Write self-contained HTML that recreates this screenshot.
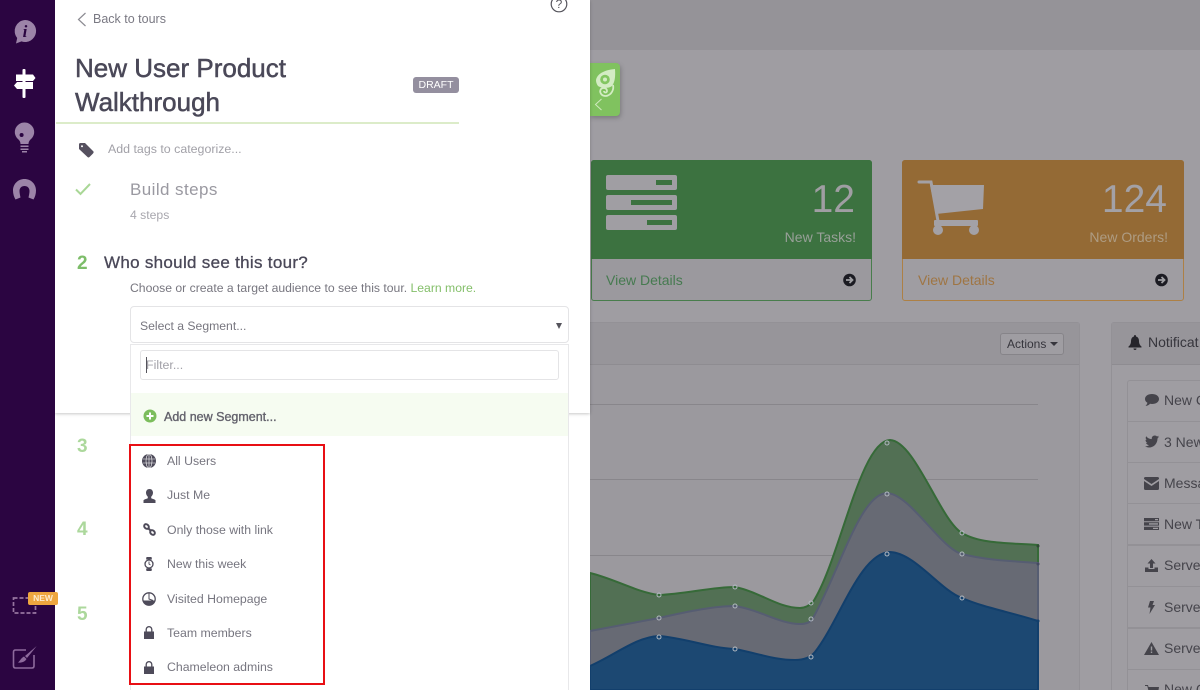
<!DOCTYPE html>
<html style="overflow:hidden;height:690px"><head><meta charset="utf-8"><style>
html,body{margin:0;padding:0}
body{width:1200px;height:690px;overflow:hidden;position:relative;background:#9f9da2;font-family:"Liberation Sans",sans-serif}
#w{position:absolute;left:0;top:0;width:1200px;height:690px;overflow:hidden;background:#9f9da2}
.a{position:absolute;white-space:nowrap}
svg{position:absolute;overflow:visible}
.row{position:absolute;left:167px;font-size:12.3px;color:#76757f;line-height:16px;white-space:nowrap}
.n{position:absolute;left:1164px;font-size:14px;color:#45444b;line-height:16px;white-space:nowrap}
.li{position:absolute;left:1127px;width:90px;height:42px;border:1px solid #939196;box-sizing:border-box}
.num{position:absolute;left:77px;font-size:19px;line-height:22px;font-weight:bold;color:#acd89c}
</style></head><body><div id="w">

<!-- dimmed backdrop -->
<div class="a" style="left:590px;top:0;width:610px;height:50px;background:#959398"></div>

<!-- green card -->
<div class="a" style="left:591px;top:160px;width:281px;height:141px;box-sizing:border-box;border:1px solid #487d4c;border-radius:3px;background:#9b999e"></div>
<div class="a" style="left:591px;top:160px;width:281px;height:99px;background:#3c7240;border-radius:3px 3px 0 0"></div>
<div class="a" style="left:606px;top:175px;width:71px;height:15px;background:#a09ea3;border-radius:2px"></div>
<div class="a" style="left:606px;top:195px;width:71px;height:15px;background:#a09ea3;border-radius:2px"></div>
<div class="a" style="left:606px;top:215px;width:71px;height:15px;background:#a09ea3;border-radius:2px"></div>
<div class="a" style="left:656px;top:180px;width:16px;height:5px;background:#3c7240"></div>
<div class="a" style="left:631px;top:200px;width:41px;height:5px;background:#3c7240"></div>
<div class="a" style="left:647px;top:220px;width:25px;height:5px;background:#3c7240"></div>
<div class="a" style="left:755px;top:179px;width:100px;text-align:right;font-size:39px;line-height:42px;color:#a09ea3">12</div>
<div class="a" style="left:735px;top:229px;width:121px;text-align:right;font-size:14px;line-height:16px;color:#98a098">New Tasks!</div>
<div class="a" style="left:606px;top:272px;font-size:14px;line-height:16px;color:#467a50">View Details</div>
<svg style="left:843px;top:273px" width="14" height="14" viewBox="0 0 14 14"><circle cx="6.5" cy="7" r="6.3" fill="#1b1b22"/><path d="M3 7h6M6.5 4l3 3-3 3" fill="none" stroke="#a0a0a4" stroke-width="1.8"/></svg>

<!-- orange card -->
<div class="a" style="left:902px;top:160px;width:282px;height:141px;box-sizing:border-box;border:1px solid #ad8045;border-radius:3px;background:#9f9da2"></div>
<div class="a" style="left:902px;top:160px;width:282px;height:99px;background:#946a35;border-radius:3px 3px 0 0"></div>
<svg style="left:918px;top:180px" width="68" height="57" viewBox="0 0 68 57"><path d="M12 5H66L65 29 18 34Z" fill="#a3a1a6"/><path d="M1 2H13L20 41" fill="none" stroke="#a3a1a6" stroke-width="3" stroke-linecap="round"/><rect x="16" y="40" width="44" height="6" rx="1" fill="#a3a1a6"/><circle cx="20" cy="50" r="5" fill="#a3a1a6"/><circle cx="56" cy="50" r="5" fill="#a3a1a6"/></svg>
<div class="a" style="left:1067px;top:179px;width:100px;text-align:right;font-size:39px;line-height:42px;color:#a3a1a6">124</div>
<div class="a" style="left:1047px;top:229px;width:121px;text-align:right;font-size:14px;line-height:16px;color:#ae9c83">New Orders!</div>
<div class="a" style="left:918px;top:272px;font-size:14px;line-height:16px;color:#9f7543">View Details</div>
<svg style="left:1155px;top:273px" width="14" height="14" viewBox="0 0 14 14"><circle cx="6.5" cy="7" r="6.3" fill="#1b1b22"/><path d="M3 7h6M6.5 4l3 3-3 3" fill="none" stroke="#a0a0a4" stroke-width="1.8"/></svg>

<!-- chart panel -->
<div class="a" style="left:560px;top:322px;width:520px;height:380px;box-sizing:border-box;border:1px solid #939196;border-radius:3px;background:#9b999e"></div>
<div class="a" style="left:561px;top:323px;width:518px;height:41px;background:#97959a;border-bottom:1px solid #8e8c91"></div>
<div class="a" style="left:1000px;top:333px;width:64px;height:22px;box-sizing:border-box;border:1px solid #868489;border-radius:3px;background:#9f9da2;font-size:12px;line-height:21px;color:#36353c;padding-left:6px">Actions<span style="display:inline-block;margin-left:4px;vertical-align:2px;border-left:4px solid transparent;border-right:4px solid transparent;border-top:4px solid #36353c"></span></div>
<svg style="left:0;top:0" width="1200" height="690" viewBox="0 0 1200 690">
<path d="M590 404.500H1038M590 479.500H1038M590 555.500H1038" stroke="#88868b" stroke-width="1"/>
<path d="M590 573C615 579 636 592 659 595C685 594 712 587 735 587C760 592 778 608 800 608C806 608 811 604 813 602C840 560 860 441 890 440C915 441 940 520 962 533C980 544 1010 543 1038 545V690H590Z" fill="#527054" stroke="#366a38" stroke-width="2"/>
<path d="M590 631L659 618C690 611 715 606 735 606C760 610 780 624 800 624C806 624 811 622 813 618C840 570 860 494 887 493C910 494 940 548 962 554C985 560 1010 561 1038 563V690H590Z" fill="#676a74" stroke="#565d72" stroke-width="2"/>
<path d="M590 666C615 655 636 637 659 636C685 638 710 648 735 649C760 654 775 660 795 660C805 660 811 657 815 652C840 620 860 553 890 552C915 553 940 590 962 598C985 608 1010 612 1038 621V690H590Z" fill="#1c4872" stroke="#123f6c" stroke-width="2"/>
<g fill="none" stroke="#b0b7bf" stroke-width="1">
<circle cx="659" cy="595" r="2"/><circle cx="735" cy="587" r="2"/><circle cx="811" cy="603" r="2"/><circle cx="887" cy="443" r="2"/><circle cx="962" cy="533" r="2"/>
<circle cx="659" cy="618" r="2"/><circle cx="735" cy="606" r="2"/><circle cx="811" cy="619" r="2"/><circle cx="887" cy="494" r="2"/><circle cx="962" cy="554" r="2"/>
<circle cx="659" cy="637" r="2"/><circle cx="735" cy="649" r="2"/><circle cx="811" cy="657" r="2"/><circle cx="887" cy="554" r="2"/><circle cx="962" cy="598" r="2"/>
</g>
<circle cx="1038" cy="546" r="1.500" fill="#2f4a35"/><circle cx="1038" cy="564" r="1.500" fill="#444a60"/><circle cx="1038" cy="621" r="1.500" fill="#123f6c"/>
</svg>

<!-- notifications panel -->
<div class="a" style="left:1111px;top:322px;width:120px;height:380px;box-sizing:border-box;border:1px solid #939196;border-radius:3px;background:#9f9da2"></div>
<div class="a" style="left:1112px;top:323px;width:100px;height:41px;background:#97959a;border-bottom:1px solid #8e8c91"></div>
<div class="a" style="left:1148px;top:334px;font-size:14px;line-height:16px;color:#36353c">Notificat</div>
<svg style="left:1128px;top:335px" width="14" height="15" viewBox="0 0 14 15"><path d="M7 0c1 0 1 1 1 1.500 2 .5 3 2 3 5 0 2 1 4 2.500 5v1H.5v-1C2 10.500 3 8.500 3 6.500c0-3 1-4.500 3-5C6 1 6 0 7 0zM5.500 13.500h3C8.500 14.500 8 15 7 15s-1.500-.5-1.500-1.500z" fill="#26252b"/></svg>
<div class="li" style="top:380px;border-radius:3px 3px 0 0"></div>
<div class="li" style="top:421px"></div>
<div class="li" style="top:462px"></div>
<div class="li" style="top:503px"></div>
<div class="li" style="top:545px"></div>
<div class="li" style="top:586px"></div>
<div class="li" style="top:628px"></div>
<div class="li" style="top:669px;height:30px"></div>
<div class="n" style="top:392px">New C</div>
<div class="n" style="top:434px">3 New</div>
<div class="n" style="top:475px">Messa</div>
<div class="n" style="top:516px">New T</div>
<div class="n" style="top:557px">Serve</div>
<div class="n" style="top:599px">Serve</div>
<div class="n" style="top:640px">Serve</div>
<div class="n" style="top:681px">New C</div>
<svg style="left:1144px;top:393px" width="16" height="14" viewBox="0 0 16 14"><path d="M8 1c4 0 7 2 7 5s-3 5-7 5c-.8 0-1.500 0-2-.2C5 12 3.500 13 1.500 13c1-1 1.700-2 1.900-3.200C1.800 8.900 1 7.500 1 6c0-3 3-5 7-5z" fill="#45444b"/></svg>
<svg style="left:1145px;top:435px" width="14" height="13" viewBox="0 0 14 13"><path d="M14 2l-1.500 1.500c0 5-3.500 9-8.500 9-1.500 0-3-.5-4-1.200 1.500.1 3-.3 4-1.200C2.500 10 1.500 9 1 8h1.300C1 7.300 .5 6 .5 4.800c.4.200.8.300 1.200.3C.6 4 .4 2.500 1.200 1.200 2.600 3 4.500 4 6.800 4.100 6.400 2 8 .5 9.800.5c1 0 1.700.4 2.200 1 .7-.1 1.300-.4 1.800-.7-.2.700-.6 1.200-1.200 1.600.5 0 1-.2 1.400-.4z" fill="#45444b"/></svg>
<svg style="left:1144px;top:477px" width="15" height="13" viewBox="0 0 15 13"><path d="M0 1.500Q0 0 1.500 0h12Q15 0 15 1.500v.5L7.500 7 0 2zM0 4l7.500 5L15 4v7.500Q15 13 13.500 13h-12Q0 13 0 11.500z" fill="#45444b"/></svg>
<svg style="left:1144px;top:518px" width="15" height="12" viewBox="0 0 15 12"><path d="M0 0h15v3.300H0zM0 4.300h15v3.300H0zM0 8.700h15V12H0z" fill="#45444b"/><path d="M11 1h3v1.300h-3zM5 5.300h9v1.300H5zM9 9.700h5V11H9z" fill="#9f9da2"/></svg>
<svg style="left:1145px;top:559px" width="13" height="13" viewBox="0 0 13 13"><path d="M6.500 0L10.500 4.500H8V9H5V4.500H2.500zM0 8.500h3.500V10h6V8.500H13V13H0z" fill="#45444b"/></svg>
<svg style="left:1148px;top:601px" width="7" height="13" viewBox="0 0 7 13"><path d="M2 0h4L4.500 4H7L1.500 13 2.500 6.500H0z" fill="#45444b"/></svg>
<svg style="left:1144px;top:642px" width="15" height="13" viewBox="0 0 15 13"><path d="M7.500 0L15 13H0zM6.800 4.500v4h1.400v-4zM6.800 9.500v1.500h1.400V9.500z" fill="#45444b" fill-rule="evenodd"/></svg>
<svg style="left:1145px;top:684px" width="14" height="12" viewBox="0 0 14 12"><path d="M0 1h3l.5 2H14l-1 6H4L2.300 2H0z" fill="#45444b"/></svg>

<!-- green tab -->
<div class="a" style="left:590px;top:63px;width:30px;height:53px;background:#80c25f;border-radius:0 4px 4px 0;box-shadow:1px 2px 4px rgba(60,60,60,.35)"></div>
<svg style="left:594px;top:68px" width="24" height="44" viewBox="0 0 24 44"><path d="M2 12C3 6 10 2 21 1C21.500 8 21 14 18 18C14 21 7 20 4 18C2.500 16 2 14 2 12z" fill="#d3ecc4"/><circle cx="11" cy="11.500" r="4.800" fill="#83c662"/><circle cx="11" cy="11.500" r="2" fill="#d3ecc4"/><path d="M19 17C20 21 18 27 12 28C7 28 5 24 7 21C9 19 13 20 13 23C13 25 10 25 10 23" fill="none" stroke="#d3ecc4" stroke-width="1.800"/><path d="M7.500 31L1.500 36.500L7.500 42" fill="none" stroke="#cfe9bf" stroke-width="1"/></svg>

<!-- white drawer -->
<div class="a" style="left:55px;top:0;width:535px;height:690px;background:#fff"></div>
<div class="a" style="left:55px;top:0;width:535px;height:413px;background:#fff;box-shadow:0 1px 3px rgba(0,0,0,.22)"></div>

<!-- sidebar -->
<div class="a" style="left:0;top:0;width:55px;height:690px;background:#2b0541"></div>
<svg style="left:13px;top:20px" width="24" height="24" viewBox="0 0 24 24"><path d="M12 0a11 11 0 1 1-3.500 21.400L3 23.500 4.200 18A11 11 0 0 1 12 0z" fill="#9c84a8"/><text x="12" y="17" text-anchor="middle" font-family="Liberation Serif,serif" font-weight="bold" font-style="italic" font-size="17" fill="#2b0541">i</text></svg>
<svg style="left:13px;top:68px" width="24" height="32" viewBox="0 0 24 32"><rect x="9.500" y="1" width="3" height="29" rx="1" fill="#fff"/><path d="M3 6.500H20L22.500 10 20 13H3zM4 14H20V21H4L1 17.500z" fill="#fff"/></svg>
<svg style="left:15px;top:122px" width="21" height="32" viewBox="0 0 21 32"><path d="M9.500 .5a9.500 9.500 0 0 1 6 17c-1.500 1.500-2 3-2 4.500h-8c0-1.500-.5-3-2-4.500a9.500 9.500 0 0 1 6-17z" fill="#9c84a8"/><circle cx="6.600" cy="13" r="2" fill="#2b0541"/><path d="M5.500 23.500h8V25h-8zM5.500 26.500h8V28h-8zM7 29h5v1.500H7z" fill="#9c84a8"/></svg>
<svg style="left:12px;top:178px" width="25" height="24" viewBox="0 0 25 24"><path d="M12.500 1C19 1 24 6 24 12.500C24 16 23 19 21.500 21.500L16.500 19.500C17 17 17.500 15 17.500 13C17.500 10 15.500 8 12.500 8C9.500 8 7.500 10 7.500 13C7.500 15 8 17 8.500 19.500L3.500 21.500C2 19 1 16 1 12.500C1 6 6 1 12.500 1z" fill="#9c84a8"/></svg>
<svg style="left:12px;top:596px" width="26" height="18" viewBox="0 0 26 18"><rect x="1.500" y="2" width="22" height="15" fill="none" stroke="#96749f" stroke-width="1.700" stroke-dasharray="4 2"/></svg>
<div class="a" style="left:28px;top:592px;width:30px;height:13px;background:#eea63f;border-radius:2px;color:#fdeccf;font-size:8.500px;font-weight:bold;line-height:13px;text-align:center">NEW</div>
<svg style="left:12px;top:644px" width="26" height="27" viewBox="0 0 26 27"><path d="M14 6H3.500Q1.500 6 1.500 8V22Q1.500 24 3.500 24H20Q22 24 22 22V11" fill="none" stroke="#8d6a9c" stroke-width="1.600"/><path d="M24.700 2L15 14 13 12zM12 12.500L14.500 15C13 18 9 19 6 18.500C8 17 9 14 12 12.500z" fill="#8d6a9c"/></svg>

<!-- header content -->
<svg style="left:77px;top:12px" width="10" height="15" viewBox="0 0 10 15"><path d="M8.500 1L1.500 7.500l7 6.500" fill="none" stroke="#8c8b92" stroke-width="1.200"/></svg>
<div class="a" style="left:93px;top:11px;font-size:12.500px;line-height:16px;color:#7a7983">Back to tours</div>
<svg style="left:550px;top:-5px" width="18" height="18" viewBox="0 0 18 18"><circle cx="9" cy="9" r="7.800" fill="#fff" stroke="#55545c" stroke-width="1.200"/><text x="9" y="13" text-anchor="middle" font-family="Liberation Sans,sans-serif" font-size="12" fill="#55545c">?</text></svg>
<div class="a" style="left:75px;top:51px;font-size:26px;line-height:34px;color:#4a4858;-webkit-text-stroke:.5px #4a4858">New User Product<br>Walkthrough</div>
<div class="a" style="left:413px;top:77px;width:46px;height:16px;background:#948f9f;border-radius:3px;color:#fff;font-size:10.500px;line-height:16px;text-align:center">DRAFT</div>
<div class="a" style="left:56px;top:122px;width:403px;height:2px;background:#dcecc9"></div>
<svg style="left:79px;top:143px" width="15" height="15" viewBox="0 0 15 15"><path d="M0 1.500Q0 0 1.500 0H6l8.500 8.500Q15 9.500 14 10.500L10.500 14Q9.500 15 8.500 14L0 6zM3 2.200a1 1 0 1 0 .01 0z" fill="#55505f" fill-rule="evenodd"/></svg>
<div class="a" style="left:108px;top:141px;font-size:12.400px;line-height:16px;color:#a2a1a8">Add tags to categorize...</div>
<svg style="left:75px;top:183px" width="16" height="13" viewBox="0 0 16 13"><path d="M1 6.500l4.500 4.500L15 1" fill="none" stroke="#a9d796" stroke-width="2"/></svg>
<div class="a" style="left:130px;top:180px;font-size:17px;line-height:20px;color:#9a99a1;letter-spacing:.42px">Build steps</div>
<div class="a" style="left:130px;top:208px;font-size:12.200px;line-height:15px;color:#a8a7ae">4 steps</div>

<div class="num" style="top:253px;color:#7dbd69">2</div>
<div class="a" style="left:104px;top:253px;font-size:17px;line-height:20px;color:#4a4858;-webkit-text-stroke:.3px #4a4858;letter-spacing:.3px">Who should see this tour?</div>
<div class="a" style="left:130px;top:280px;font-size:12.200px;line-height:16px;color:#77767f">Choose or create a target audience to see this tour. <span style="color:#84bf6a">Learn more.</span></div>

<div class="num" style="top:436px">3</div>
<div class="num" style="top:519px">4</div>
<div class="num" style="top:604px">5</div>

<!-- select -->
<div class="a" style="left:130px;top:306px;width:439px;height:37px;box-sizing:border-box;border:1px solid #e4e4e6;border-radius:4px;background:#fff"></div>
<div class="a" style="left:140px;top:318px;font-size:12.200px;line-height:16px;color:#77767f">Select a Segment...</div>
<div class="a" style="left:556px;top:323px;width:0;height:0;border-left:3.500px solid transparent;border-right:3.500px solid transparent;border-top:6px solid #55545c"></div>
<div class="a" style="left:130px;top:344px;width:439px;height:346px;box-sizing:border-box;border:1px solid #e8e8ea;border-bottom:0;background:#fff"></div>
<div class="a" style="left:140px;top:350px;width:419px;height:30px;box-sizing:border-box;border:1px solid #e4e4e6;border-radius:3px;background:#fff"></div>
<div class="a" style="left:146px;top:357px;width:1px;height:16px;background:#55545c"></div>
<div class="a" style="left:146px;top:357px;font-size:12.400px;line-height:16px;color:#a2a1a8">Filter...</div>
<div class="a" style="left:131px;top:393px;width:437px;height:43px;background:#f6fcf1"></div>
<svg style="left:143px;top:409px" width="14" height="14" viewBox="0 0 14 14"><circle cx="7" cy="7" r="6.500" fill="#7cbd5c"/><path d="M7 3.500v7M3.500 7h7" stroke="#fff" stroke-width="2"/></svg>
<div class="a" style="left:164px;top:409px;font-size:12.500px;line-height:16px;color:#63626c;-webkit-text-stroke:.35px #63626c">Add new Segment...</div>

<!-- red box -->
<div class="a" style="left:129px;top:444px;width:196px;height:241px;box-sizing:border-box;border:2px solid #e80f14"></div>

<div class="row" style="top:453px">All Users</div>
<div class="row" style="top:487px">Just Me</div>
<div class="row" style="top:522px">Only those with link</div>
<div class="row" style="top:556px">New this week</div>
<div class="row" style="top:591px">Visited Homepage</div>
<div class="row" style="top:625px">Team members</div>
<div class="row" style="top:659px">Chameleon admins</div>

<svg style="left:142px;top:454px" width="14" height="14" viewBox="0 0 14 14"><circle cx="7" cy="7" r="7" fill="#4e4b5a"/><g stroke="#fff" stroke-width=".6" fill="none"><ellipse cx="7" cy="7" rx="3" ry="7"/><path d="M7 0v14M.8 5h12.400M.8 9h12.400"/></g></svg>
<svg style="left:143px;top:489px" width="13" height="14" viewBox="0 0 13 14"><path d="M6.500 0C8.800 0 10 1.800 10 3.800 10 5.500 9 7 8.200 7.800v1.500c1.500.6 3.500 1.200 4.300 2V14H.5v-2.700c.8-.8 2.800-1.400 4.300-2V7.800C4 7 3 5.500 3 3.800 3 1.800 4.200 0 6.500 0z" fill="#4e4b5a"/></svg>
<svg style="left:143px;top:523px" width="13" height="13" viewBox="0 0 13 13"><g fill="none" stroke="#4e4b5a" stroke-width="2"><ellipse cx="3.500" cy="3.500" rx="2.600" ry="2" transform="rotate(45 3.500 3.500)"/><ellipse cx="9.500" cy="9.500" rx="2.600" ry="2" transform="rotate(45 9.500 9.500)"/><path d="M5 5l3 3"/></g></svg>
<svg style="left:144px;top:557px" width="10" height="14" viewBox="0 0 10 14"><path d="M2.500 0h5l.5 2.500h-6zM2.500 14h5l.5-2.500h-6z" fill="#4e4b5a"/><circle cx="5" cy="7" r="4" fill="#fff" stroke="#4e4b5a" stroke-width="1.300"/><path d="M5 4.500V7l1.500 1" fill="none" stroke="#4e4b5a" stroke-width=".9"/></svg>
<svg style="left:142px;top:592px" width="14" height="14" viewBox="0 0 14 14"><circle cx="7" cy="7" r="6.200" fill="#fff" stroke="#4e4b5a" stroke-width="1.300"/><path d="M1 8.500H13A6.200 6.200 0 0 1 1 8.500z" fill="#4e4b5a"/><path d="M7 1.500V7L11 8.500" fill="none" stroke="#4e4b5a" stroke-width="1"/></svg>
<svg style="left:144px;top:626px" width="10" height="13" viewBox="0 0 10 13"><path d="M0 5.500h10V13H0z" fill="#4e4b5a"/><path d="M2.200 6V3.500a2.800 2.800 0 0 1 5.600 0V6" fill="none" stroke="#4e4b5a" stroke-width="1.300"/></svg>
<svg style="left:144px;top:661px" width="10" height="13" viewBox="0 0 10 13"><path d="M0 5.500h10V13H0z" fill="#4e4b5a"/><path d="M2.200 6V3.500a2.800 2.800 0 0 1 5.600 0V6" fill="none" stroke="#4e4b5a" stroke-width="1.300"/></svg>

</div></body></html>
